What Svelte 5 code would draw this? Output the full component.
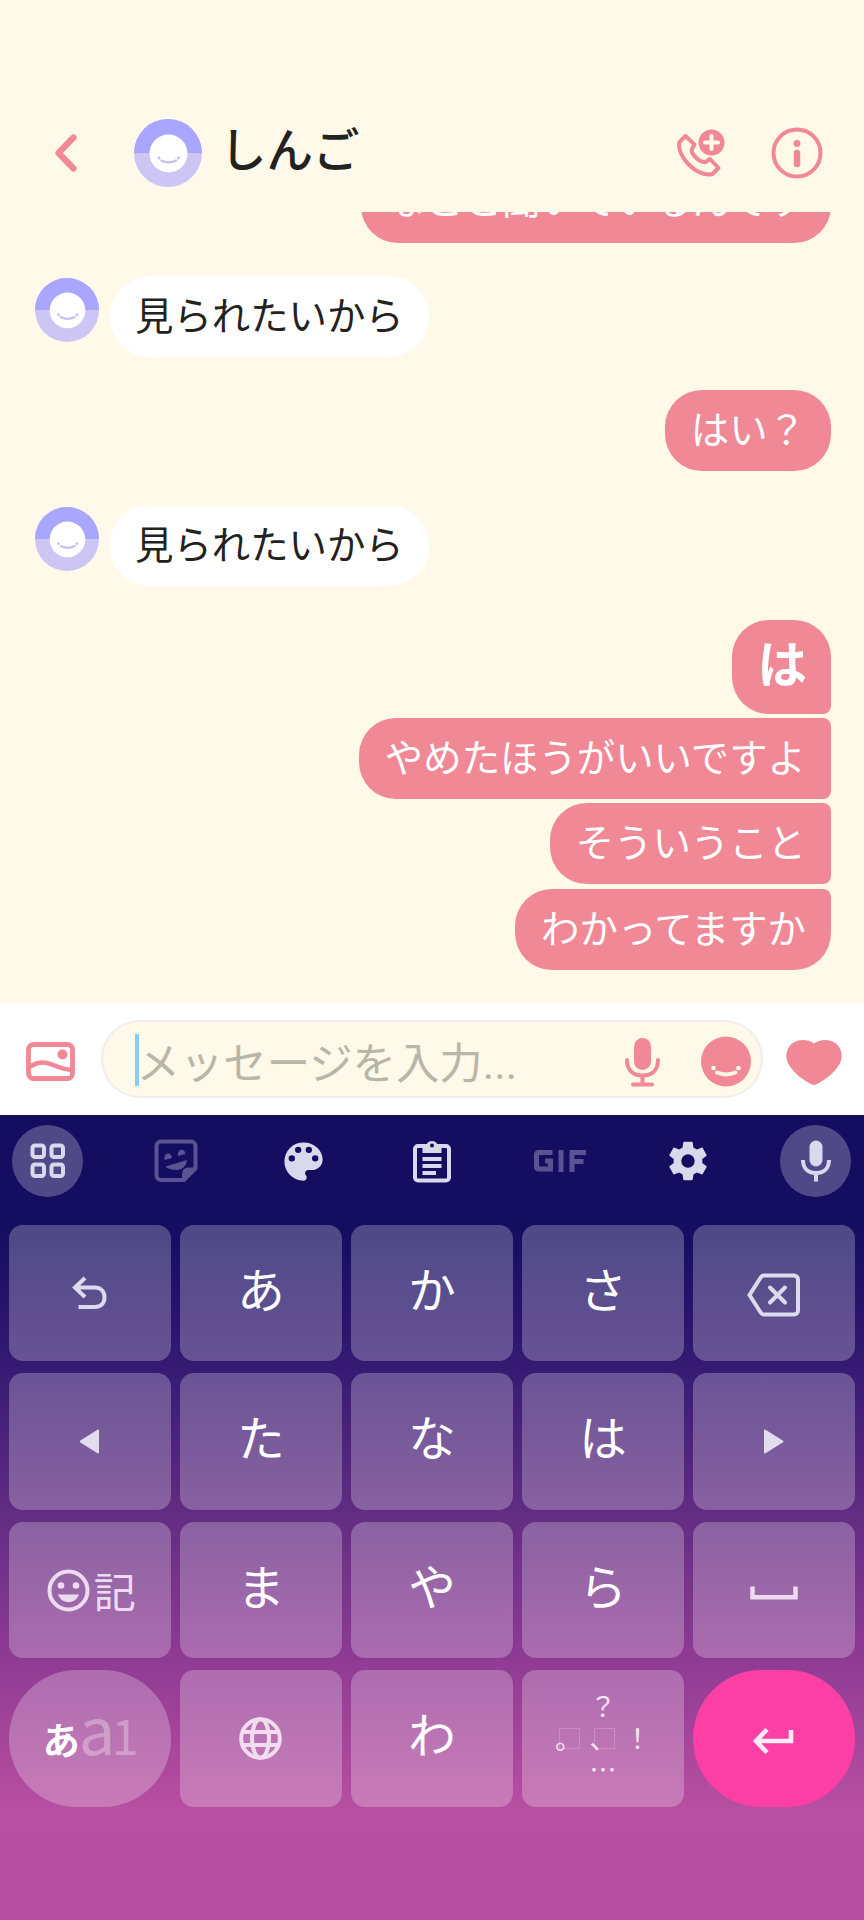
<script lang="ts">
	type Message = { text: string; mine: boolean; shape?: string; gap?: number };

	const contact = 'しんご';

	const messages: Message[] = [
		{ text: 'なこと聞いているんです', mine: true, shape: 'tall' },
		{ text: '見られたいから', mine: false, gap: 33 },
		{ text: 'はい？', mine: true, gap: 33 },
		{ text: '見られたいから', mine: false, gap: 34 },
		{ text: 'は', mine: true, shape: 'first big', gap: 34 },
		{ text: 'やめたほうがいいですよ', mine: true, shape: 'middle', gap: 4 },
		{ text: 'そういうこと', mine: true, shape: 'middle', gap: 4 },
		{ text: 'わかってますか', mine: true, shape: 'last', gap: 5 }
	];

	const keys: string[] = [
		'undo', 'あ', 'か', 'さ', 'delete',
		'left', 'た', 'な', 'は', 'right',
		'emoji', 'ま', 'や', 'ら', 'space',
		'mode', 'globe', 'わ', 'marks', 'enter'
	];

	let draft: string = $state('');
</script>

{#snippet avatar(size: string)}
	<svg class="avatar {size}" viewBox="0 0 68 68">
		<circle cx="34" cy="34" r="34" fill="#cdc6f5" />
		<path d="M0 34a34 34 0 0 1 68 0z" fill="#a9a6ff" />
		<circle cx="34.5" cy="34.5" r="19" fill="#fff" />
		<path d="M27.5 41.5q7 3.800 14.500 0" fill="none" stroke="#c3bff2" stroke-width="2.4" stroke-linecap="round" />
		<circle cx="25" cy="39" r="1.500" fill="#c3bff2" />
		<circle cx="44.500" cy="39" r="1.500" fill="#c3bff2" />
	</svg>
{/snippet}

<div class="screen">
	<header>
		<button class="back" aria-label="戻る">
			<svg width="22" height="38" viewBox="0 0 22 38">
				<path d="M18.5 3.500L3.500 19l15 15.500" class="line" stroke-width="6.200" />
			</svg>
		</button>
		{@render avatar('large')}
		<h1>{contact}</h1>
		<button class="call" aria-label="通話">
			<svg width="48" height="50" viewBox="0 0 48 50">
				<path
					d="M8.500 7L17.500 15.500 14.500 21C15 26 23 34 28.500 33L33 30 41.500 39 35.500 45C20 49-1 27 2.500 13z"
					class="line"
					stroke-width="4"
				/>
				<circle cx="34.500" cy="13.500" r="13" fill="#f18896" />
				<path d="M34.500 7v13M28 13.500h13" stroke="#fff9ea" stroke-width="4" stroke-linecap="round" />
			</svg>
		</button>
		<button class="info" aria-label="情報">
			<svg width="52" height="52" viewBox="0 0 52 52">
				<circle cx="26" cy="26" r="23.500" class="line" stroke-width="4" />
				<circle cx="26" cy="16.500" r="3.500" fill="#f18896" />
				<path d="M26 26v11" class="line" stroke-width="6.500" />
			</svg>
		</button>
	</header>

	<main>
		{#each messages as message}
			<div class="row" class:mine={message.mine} style="margin-top: {message.gap ?? 0}px">
				{#if !message.mine}
					{@render avatar('small')}
				{/if}
				<p class="bubble {message.shape ?? ''}">{message.text}</p>
			</div>
		{/each}
	</main>

	<div class="composer">
		<svg width="51" height="40" viewBox="0 0 51 40">
			<rect x="2.500" y="2.500" width="44" height="34" rx="5" class="line" stroke-width="4.800" />
			<path d="M4 24.500c8-5 15-5 22-2s13 5 20 5.500" class="line" stroke-width="4.500" />
			<circle cx="36.500" cy="12.500" r="5" fill="#f18896" />
		</svg>
		<div class="field">
			<span class="caret"></span>
			<input bind:value={draft} placeholder="メッセージを入力..." />
			<svg class="mic" width="35" height="50" viewBox="0 0 35 50">
				<rect x="9" y="1" width="17" height="32" rx="8.500" fill="#f18896" />
				<path d="M2 23c0 10 6 15.500 15.500 15.500S33 33 33 23M17.500 39v7M8 47.500h19" class="line" stroke-width="4" />
			</svg>
			<svg width="50" height="51" viewBox="0 0 50 51">
				<circle cx="25" cy="25.500" r="25" fill="#f18896" />
				<path d="M16 36.500q9 3.800 18.500 0" fill="none" stroke="#fff9ea" stroke-width="4" stroke-linecap="round" />
				<circle cx="12.500" cy="32" r="2.300" fill="#fff9ea" />
				<circle cx="37.500" cy="32" r="2.300" fill="#fff9ea" />
			</svg>
		</div>
		<svg width="56" height="46" viewBox="0 0 56 46">
			<path
				d="M28 4.500C23 .5 14-.5 7.500 3.500 0 8.500-1.500 18 2.500 25 8 34.500 17 41 26 45.500q2 .8 4 0C39 41 48 34.500 53.500 25c4-7 2.500-16.500-5-21.500C42-.5 33 .5 28 4.500z"
				fill="#f18896"
			/>
		</svg>
	</div>

	<div class="keyboard">
		<div class="toolbar">
			<span class="tool round">
				<svg width="36" height="36" viewBox="0 0 36 36" class="stroke">
					<rect x="2.500" y="2.500" width="11.500" height="11.500" rx="2.500" />
					<rect x="21.500" y="2.500" width="11.500" height="11.500" rx="2.500" />
					<rect x="2.500" y="21.500" width="11.500" height="11.500" rx="2.500" />
					<rect x="21.500" y="21.500" width="11.500" height="11.500" rx="2.500" />
				</svg>
			</span>
			<span class="tool dim">
				<svg width="44" height="44" viewBox="0 0 44 44">
					<path d="M30 41H7a4.500 4.500 0 0 1-4.500-4.500V7A4.500 4.500 0 0 1 7 2.500h30A4.500 4.500 0 0 1 41.500 7v22.500z" fill="none" stroke="#d9d8ec" stroke-width="4" />
					<path d="M28 42v-7q0-6.500 7-6.500h7zM11.500 27.500L33 21c-.5 6-5 10-10.500 10-5 0-9-1.500-11-3.500zM10.500 21c-1-8 7-8.500 7.500-2zM24 17c-1-8 7-8 7.500-2z" fill="#d9d8ec" />
				</svg>
			</span>
			<span class="tool">
				<svg width="51" height="51" viewBox="0 0 24 24" fill="#d9d8ec">
					<path
						d="M12 3a9 9 0 0 0 0 18c.83 0 1.500-.67 1.500-1.500 0-.39-.15-.74-.39-1.010-.23-.26-.38-.61-.38-.99 0-.83.67-1.500 1.500-1.500H16c2.760 0 5-2.240 5-5 0-4.420-4.030-8-9-8zm-5.500 9a1.500 1.500 0 1 1 0-3 1.500 1.500 0 0 1 0 3zm3-4a1.500 1.500 0 1 1 0-3 1.500 1.500 0 0 1 0 3zm5 0a1.500 1.500 0 1 1 0-3 1.500 1.500 0 0 1 0 3zm3 4a1.500 1.500 0 1 1 0-3 1.500 1.500 0 0 1 0 3z"
					/>
				</svg>
			</span>
			<span class="tool">
				<svg width="38" height="44" viewBox="0 0 38 44" class="stroke">
					<rect x="2" y="7" width="34" height="34.500" rx="3" />
					<path d="M9.500 5.500h4a6 6 0 0 1 11 0h4V14h-19z" fill="#d9d8ec" stroke="none" />
					<circle cx="19" cy="6.500" r="2" fill="#150d62" stroke="none" />
					<path d="M9.500 20h19M9.500 27h19M9.500 34H23" />
				</svg>
			</span>
			<span class="tool dim">
				<svg width="52" height="24" viewBox="0 0 52 24">
					<path d="M18.500 3.500H4.500a2 2 0 0 0-2 2v12.500a2 2 0 0 0 2 2h12V12H11M27 1v22M38 23V3.500h14M38 12.500h11.500" fill="none" stroke="#d9d8ec" stroke-width="5" />
				</svg>
			</span>
			<span class="tool">
				<svg width="46" height="46" viewBox="0 0 24 24" fill="#d9d8ec">
					<path
						d="M19.430 12.980c.04-.32.070-.64.070-.98s-.03-.66-.07-.98l2.110-1.650c.19-.15.24-.42.120-.64l-2-3.460c-.12-.22-.39-.3-.61-.22l-2.490 1c-.52-.4-1.080-.73-1.690-.98l-.38-2.650C14.460 2.180 14.250 2 14 2h-4c-.25 0-.46.18-.49.420l-.38 2.650c-.61.25-1.170.59-1.690.98l-2.490-1c-.23-.09-.49 0-.61.220l-2 3.460c-.13.22-.07.49.120.640l2.110 1.650c-.04.32-.07.65-.07.980s.03.66.07.980l-2.110 1.650c-.19.15-.24.42-.12.640l2 3.460c.12.22.39.3.610.220l2.490-1c.52.4 1.080.73 1.690.980l.38 2.650c.03.24.24.42.490.420h4c.25 0 .46-.18.490-.42l.38-2.650c.61-.25 1.170-.59 1.690-.98l2.490 1c.23.09.49 0 .610-.22l2-3.460c.12-.22.07-.49-.12-.64l-2.110-1.650zM12 15.500a3.500 3.500 0 1 1 0-7 3.500 3.500 0 0 1 0 7z"
					/>
				</svg>
			</span>
			<span class="tool round">
				<svg width="30" height="42" viewBox="0 0 30 42">
					<rect x="8.500" y="0.500" width="13" height="26" rx="6.500" fill="#d9d8ec" />
					<path d="M2 20c0 8 5 13 13 13s13-5 13-13M15 33v8.500" fill="none" stroke="#d9d8ec" stroke-width="4" />
				</svg>
			</span>
		</div>

		<div class="keys">
			{#each keys as key}
				<button class="key {key.length > 1 ? key : ''}">
					{#if key === 'undo'}
						<svg width="36" height="34" viewBox="0 0 36 34" class="stroke light">
							<path d="M13 2L3 11.500l10 9.500M3.500 11.500h19c6 0 10 4 10 10s-4 9.500-10 9.500h-16" />
						</svg>
					{:else if key === 'delete'}
						<svg width="54" height="44" viewBox="0 0 54 44" class="stroke light">
							<path d="M17 2.500h30a4 4 0 0 1 4 4v31a4 4 0 0 1-4 4H17q-2 0-3-1.500L2.500 22 14 4q1-1.500 3-1.500z" />
							<path d="M23 14.500L38 29.500M38 14.500L23 29.500" stroke-linecap="round" />
						</svg>
					{:else if key === 'left'}
						<svg width="20" height="25" viewBox="0 0 20 25">
							<path d="M18 1.500v22L.5 12.500z" class="arrow" />
						</svg>
					{:else if key === 'right'}
						<svg width="20" height="25" viewBox="0 0 20 25">
							<path d="M1 1.500v22L18.500 12.500z" class="arrow" />
						</svg>
					{:else if key === 'emoji'}
						<svg width="43" height="43" viewBox="0 0 43 43">
							<circle cx="21.500" cy="21.500" r="19" fill="none" stroke="#eddcf1" stroke-width="4" />
							<circle cx="14" cy="16.500" r="3.300" fill="#eddcf1" />
							<circle cx="29" cy="16.500" r="3.300" fill="#eddcf1" />
							<path d="M11 25.500h21c-2 5-5.500 7.500-10.500 7.500S13 30.500 11 25.500z" fill="#eddcf1" />
						</svg>
						<span>記</span>
					{:else if key === 'space'}
						<svg width="48" height="14" viewBox="0 0 48 14" class="stroke pale">
							<path d="M2.500 0.500v10.800h43V.5" />
						</svg>
					{:else if key === 'mode'}
						<b>あ</b><span class="latin">a</span><span class="digit">1</span>
					{:else if key === 'globe'}
						<svg width="43" height="43" viewBox="0 0 43 43" class="stroke rosy">
							<circle cx="21.500" cy="21.500" r="19.300" />
							<ellipse cx="21.500" cy="21.500" rx="8.500" ry="19.300" />
							<path d="M3.500 15h36M3.500 28h36" />
						</svg>
					{:else if key === 'marks'}
						<span class="wide">？</span>
						<span class="mark">。</span>
						<span class="mark">、</span>
						<span>！</span>
						<span class="wide">…</span>
					{:else if key === 'enter'}
						<svg width="42" height="26" viewBox="0 0 42 26" fill="none" stroke="#ffeaf6" stroke-width="4.600">
							<path d="M14 1.500L3 13l11 11.500M3 13h35V2" />
						</svg>
					{:else}
						{key}
					{/if}
				</button>
			{/each}
		</div>
	</div>
</div>

<style>
	:global(body) {
		background: #fff9ea;
	}

	.screen {
		width: 864px;
		height: 1920px;
		display: flex;
		flex-direction: column;
		overflow: hidden;
		background: #fff9ea;
		font-family: 'Noto Sans CJK JP', sans-serif;
	}

	svg {
		display: block;
		flex: none;
	}

	button {
		padding: 0;
		border: 0;
		background: none;
		font: inherit;
	}

	.line {
		fill: none;
		stroke: #f18896;
		stroke-linecap: round;
		stroke-linejoin: round;
	}

	header {
		height: 212px;
		flex: none;
		box-sizing: border-box;
		padding: 94px 41px 0 55px;
		display: flex;
		align-items: flex-start;
	}

	.back {
		margin-top: 40px;
	}

	.avatar.large {
		width: 68px;
		height: 68px;
		margin: 25px 0 0 57px;
	}

	.avatar.small {
		width: 64px;
		height: 64px;
		margin: 2px 11px 0 0;
	}

	h1 {
		margin: 17px auto 0 18px;
		font-size: 46.5px;
		line-height: 72px;
		font-weight: 500;
		color: #24221e;
	}

	.call {
		margin: 35px 46px 0 0;
	}

	.info {
		margin: 33px 0 0;
	}

	main {
		height: 791px;
		flex: none;
		box-sizing: border-box;
		padding: 0 33px 33px 35px;
		display: flex;
		flex-direction: column;
		justify-content: flex-end;
		overflow: hidden;
	}

	.row {
		flex: none;
		display: flex;
		align-items: flex-start;
	}

	.row.mine {
		justify-content: flex-end;
	}

	.bubble {
		height: 81px;
		box-sizing: border-box;
		margin: 0;
		padding: 0 25px;
		border-radius: 40px;
		background: #fff;
		color: #24221e;
		font-size: 38.4px;
		line-height: 75px;
		white-space: nowrap;
	}

	.mine .bubble {
		padding-left: 26px;
		border-radius: 37px;
		background: #f18896;
		color: #fff;
		line-height: 74px;
	}

	.mine .tall {
		line-height: 70px;
	}

	.mine .first {
		border-bottom-right-radius: 8px;
	}

	.mine .middle {
		border-top-right-radius: 8px;
		border-bottom-right-radius: 8px;
	}

	.mine .last {
		border-top-right-radius: 8px;
	}

	.mine .big {
		height: 94px;
		padding: 0 24px 0 26px;
		font-size: 49.5px;
		line-height: 83px;
		font-weight: 600;
	}

	.composer {
		height: 112px;
		flex: none;
		box-sizing: border-box;
		padding: 0 22px 0 26px;
		display: flex;
		align-items: center;
		justify-content: space-between;
		background: #fff;
	}

	.composer svg {
		margin-top: 5px;
	}

	.field {
		width: 662px;
		height: 78px;
		box-sizing: border-box;
		padding: 0 10px 0 32px;
		display: flex;
		align-items: center;
		border: 2px solid #eeeeec;
		border-radius: 39px;
		background: #fff9ea;
	}

	.caret {
		width: 4px;
		height: 52px;
		margin-top: 2px;
		background: #8bcdf2;
	}

	input {
		flex: 1;
		min-width: 0;
		height: 72px;
		padding: 10px 0 0;
		margin-left: -2px;
		box-sizing: border-box;
		border: 0;
		outline: 0;
		background: none;
		font: inherit;
		font-size: 43.4px;
		font-family: Roboto, 'Noto Sans CJK JP', sans-serif;
	}

	input::placeholder {
		color: #b9b5a7;
		opacity: 1;
	}

	.mic {
		margin-right: 41px;
	}

	.keyboard {
		flex: 1;
		background: linear-gradient(
			#140d60 0,
			#140d60 115px,
			#361a72 250px,
			#622d82 400px,
			#8f3b94 545px,
			#b84fa0 695px,
			#b64ea0 100%
		);
	}

	.toolbar {
		height: 110px;
		box-sizing: border-box;
		padding: 10px 13px 0 12px;
		display: flex;
		align-items: flex-start;
		justify-content: space-between;
	}

	.tool {
		width: 71px;
		height: 72px;
		display: grid;
		place-items: center;
	}

	.round {
		border-radius: 50%;
		background: rgba(255, 255, 255, 0.25);
	}

	.dim {
		opacity: 0.35;
	}

	.stroke {
		fill: none;
		stroke: #d9d8ec;
		stroke-width: 4px;
	}

	.light {
		stroke: #dcdbed;
	}

	.pale {
		stroke: #eddcf1;
		stroke-width: 4.5px;
	}

	.rosy {
		stroke: #f2dcf0;
	}

	.arrow {
		fill: #e4dcec;
		stroke: #e4dcec;
		stroke-width: 2px;
		stroke-linejoin: round;
	}

	.keys {
		padding: 0 9px;
		display: grid;
		grid-template-columns: repeat(5, 1fr);
		grid-auto-rows: 136.4px;
		gap: 12.1px 9.6px;
	}

	.key {
		min-width: 0;
		display: flex;
		align-items: center;
		justify-content: center;
		padding-bottom: 11px;
		border-radius: 14px;
		background: rgba(255, 255, 255, 0.25);
		color: #fff;
		font-size: 47.5px;
		line-height: 66px;
	}

	.undo,
	.left,
	.right,
	.globe {
		padding: 0;
	}

	.delete,
	.enter {
		padding: 4px 0 0;
	}

	.space {
		padding: 5px 0 0;
	}

	.emoji {
		padding: 0 0 0 3px;
		color: #eddcf1;
		font-size: 42px;
	}

	.emoji span {
		margin-left: 4px;
	}

	.mode,
	.enter {
		border-radius: 68px;
	}

	.enter {
		background: #fb3fa4;
	}

	.mode {
		align-items: baseline;
		padding: 24px 0 0 2px;
		font-size: 37px;
	}

	.latin {
		margin: 0 -4px 0 -1px;
		font-size: 65px;
		opacity: 0.3;
	}

	.digit {
		font-size: 49px;
		opacity: 0.3;
	}

	.marks {
		display: grid;
		grid-template: 32px 32px 30px / repeat(3, 34.5px);
		place-content: center;
		place-items: center;
		padding: 0 0 3px;
		font-size: 27px;
		line-height: 30px;
		color: #f8e3f5;
	}

	.wide {
		grid-column: 1 / -1;
	}

	.mark {
		position: relative;
	}

	/* faint frame drawn beside full-width punctuation */
	.mark::before {
		content: '';
		position: absolute;
		left: 4px;
		top: 5px;
		width: 19px;
		height: 19px;
		border: 1px solid rgba(255, 255, 255, 0.18);
	}
</style>
